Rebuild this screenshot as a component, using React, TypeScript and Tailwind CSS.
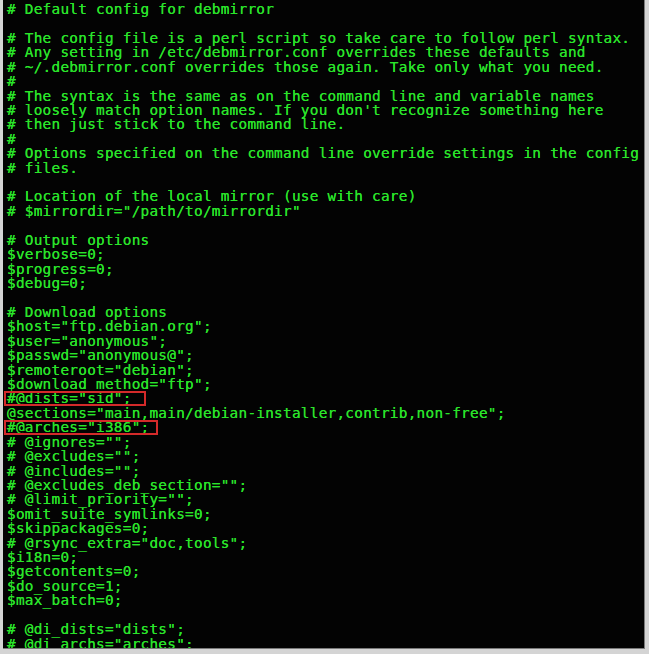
import React from "react"

const lines: string[] = [
  "# Default config for debmirror",
  "",
  "# The config file is a perl script so take care to follow perl syntax.",
  "# Any setting in /etc/debmirror.conf overrides these defaults and",
  "# ~/.debmirror.conf overrides those again. Take only what you need.",
  "#",
  "# The syntax is the same as on the command line and variable names",
  "# loosely match option names. If you don't recognize something here",
  "# then just stick to the command line.",
  "#",
  "# Options specified on the command line override settings in the config",
  "# files.",
  "",
  "# Location of the local mirror (use with care)",
  "# $mirrordir=\"/path/to/mirrordir\"",
  "",
  "# Output options",
  "$verbose=0;",
  "$progress=0;",
  "$debug=0;",
  "",
  "# Download options",
  "$host=\"ftp.debian.org\";",
  "$user=\"anonymous\";",
  "$passwd=\"anonymous@\";",
  "$remoteroot=\"debian\";",
  "$download_method=\"ftp\";",
  "#@dists=\"sid\";",
  "@sections=\"main,main/debian-installer,contrib,non-free\";",
  "#@arches=\"i386\";",
  "# @ignores=\"\";",
  "# @excludes=\"\";",
  "# @includes=\"\";",
  "# @excludes_deb_section=\"\";",
  "# @limit_priority=\"\";",
  "$omit_suite_symlinks=0;",
  "$skippackages=0;",
  "# @rsync_extra=\"doc,tools\";",
  "$i18n=0;",
  "$getcontents=0;",
  "$do_source=1;",
  "$max_batch=0;",
  "",
  "# @di_dists=\"dists\";",
  "# @di_archs=\"arches\";",
]

// lines that were marked with a red box in the screenshot
const marked: Record<number, string> = {
  27: "w-[142px]",
  29: "w-[154px]",
}

const Line: React.FC<{ text: string; index: number }> = ({ text, index }) => {
  if (marked[index]) {
    return (
      <div className="relative h-[14.43px] leading-[12px] whitespace-pre">
        <span className={"absolute left-[-3px] top-[-1px] h-[15px] border-2 border-[#d42a2a] " + marked[index]} />
        {text}
      </div>
    )
  }
  return <div className="h-[14.43px] leading-[12px] whitespace-pre">{text}</div>
}

export default function App() {
  return (
    <div className="w-[649px] h-[654px] bg-[#d4d4d4] pl-[3px]">
      <div className="w-[642px] h-[649px] bg-[#030303] border-r border-b border-[#7a7a7a] overflow-hidden pt-[3px] pl-[4px] text-[#2ae42a] font-['DejaVu_Sans_Mono',monospace] text-[14.4px] tracking-[0.24px] [text-shadow:0_0_0.6px_#2ae42a]">
        {lines.map((text, i) => (
          <Line key={i} text={text} index={i} />
        ))}
      </div>
    </div>
  )
}
